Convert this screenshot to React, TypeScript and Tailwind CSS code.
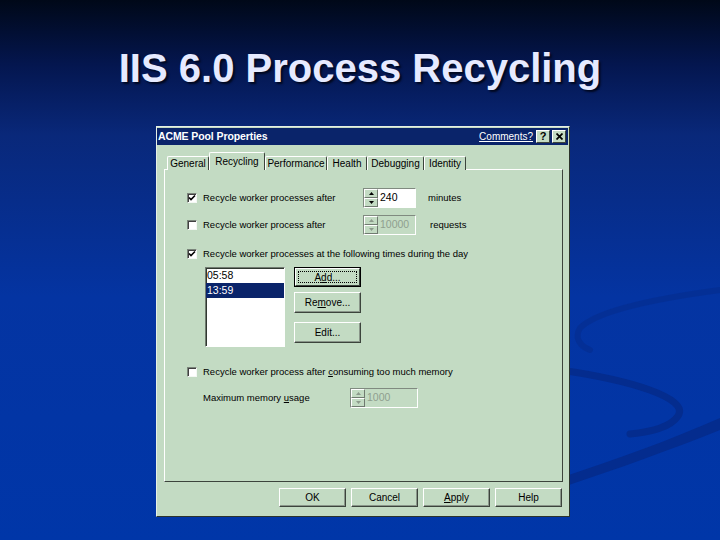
import React from "react";

const face = "bg-[#c3dbc3]";

function Checkbox({ checked }: { checked?: boolean }) {
  return (
    <div className="w-[10px] h-[10px] shrink-0 bg-white border-t border-l border-t-[#7a847a] border-l-[#7a847a] border-b border-r border-b-[#f4f8f4] border-r-[#f4f8f4] shadow-[inset_1px_1px_0_#404040] flex items-center justify-center">
      {checked && (
        <svg width="8" height="8" viewBox="0 0 8 8">
          <path d="M1 3.5 L3 5.5 L7 1.5" stroke="#000" strokeWidth="1.6" fill="none" />
        </svg>
      )}
    </div>
  );
}

function Arrow({ up, disabled }: { up?: boolean; disabled?: boolean }) {
  return (
    <svg width="5" height="3" viewBox="0 0 5 3">
      <path
        d={up ? "M0 3 L2.5 0 L5 3 Z" : "M0 0 L2.5 3 L5 0 Z"}
        fill={disabled ? "#8c9a8c" : "#000"}
      />
    </svg>
  );
}

function Spinner({
  value,
  disabled,
  width,
}: {
  value: string;
  disabled?: boolean;
  width: string;
}) {
  return (
    <div
      className={`${width} h-[20px] shrink-0 flex border-t border-l border-t-[#808a80] border-l-[#808a80] border-b border-r border-b-white border-r-white`}
    >
      <div className="w-[14px] flex flex-col">
        <div className={`flex-1 ${face} border-t border-l border-white border-b border-r border-b-[#707a70] border-r-[#707a70] flex items-center justify-center`}>
          <Arrow up disabled={disabled} />
        </div>
        <div className={`flex-1 ${face} border-t border-l border-white border-b border-r border-b-[#707a70] border-r-[#707a70] flex items-center justify-center`}>
          <Arrow disabled={disabled} />
        </div>
      </div>
      <div
        className={`flex-1 flex items-center pl-[2px] text-[10.5px] ${
          disabled ? `${face} text-[#8f9f8f]` : "bg-white text-black"
        }`}
      >
        {value}
      </div>
    </div>
  );
}

function Button({ children, h }: { children: React.ReactNode; h: string }) {
  return (
    <div
      className={`${h} w-[67px] ${face} flex items-center justify-center border-t border-l border-white border-b border-r border-b-[#3c443c] border-r-[#3c443c] shadow-[inset_-1px_-1px_0_#8a968a] text-[10px]`}
    >
      {children}
    </div>
  );
}

const tabs = [
  { label: "General", w: "w-[42px]" },
  { label: "Recycling", w: "w-[56px]", active: true },
  { label: "Performance", w: "w-[62px]" },
  { label: "Health", w: "w-[40px]" },
  { label: "Debugging", w: "w-[57px]" },
  { label: "Identity", w: "w-[42px]" },
];

export default function App() {
  return (
    <div className="relative w-[720px] h-[540px] overflow-hidden bg-[linear-gradient(to_bottom,#000818_0%,#04164f_12%,#09287a_25%,#0434a2_55%,#0036a8_100%)] font-['Liberation_Sans',Arial,sans-serif]">
      {/* background swoosh */}
      <svg className="absolute inset-0" width="720" height="540" viewBox="0 0 720 540">
        <path
          d="M720 290 C660 298 598 310 580 328 C574 338 580 346 590 350"
          stroke="#052e92"
          strokeWidth="6"
          fill="none"
          strokeLinecap="round"
          opacity="0.8"
        />
        <path
          d="M560 370 C630 380 690 398 678 416 C670 428 650 432 630 434"
          stroke="#042c8e"
          strokeWidth="7"
          fill="none"
          strokeLinecap="round"
        />
        <path
          d="M560 478 C620 458 670 440 720 418 L720 430 C670 450 620 468 560 488 Z"
          fill="#042c8e"
        />
      </svg>

      <h1 className="relative pt-[48px] text-center text-[40px] leading-[40px] font-bold text-[#e6eaff] [text-shadow:2px_2px_2px_#000820]">
        IIS 6.0 Process Recycling
      </h1>

      {/* dialog */}
      <div
        className={`relative ml-[156px] mt-[38px] w-[414px] h-[391px] ${face} border border-t-[#e6efe6] border-l-[#e6efe6] border-b-[#2c342c] border-r-[#2c342c] flex flex-col text-black`}
      >
        <div className="pt-[1px] pr-[1px]">
          <div className="h-[17px] bg-[#0a246a] flex items-center pl-[1px] pr-[2px] text-white">
            <span className="text-[10.5px] font-bold tracking-[-0.1px]">ACME Pool Properties</span>
            <span className="ml-auto text-[10px] underline">Comments?</span>
            <div className={`ml-[3px] w-[14px] h-[13px] ${face} border-t border-l border-white border-b border-r border-b-[#3c443c] border-r-[#3c443c] flex items-center justify-center text-black text-[11px] font-bold leading-none`}>
              ?
            </div>
            <div className={`ml-[2px] w-[14px] h-[13px] ${face} border-t border-l border-white border-b border-r border-b-[#3c443c] border-r-[#3c443c] flex items-center justify-center`}>
              <svg width="7" height="7" viewBox="0 0 7 7">
                <path d="M0.5 0.5 L6.5 6.5 M6.5 0.5 L0.5 6.5" stroke="#000" strokeWidth="1.7" />
              </svg>
            </div>
          </div>
        </div>

        <div className="pl-[7px] pr-[6px] flex flex-col">
          {/* tabs */}
          <div className="relative z-10 mt-[7px] h-[18px] -mb-px flex items-end pl-[3px]">
            {tabs.map((t) =>
              t.active ? (
                <div
                  key={t.label}
                  className={`${t.w} h-[18px] ${face} border-t border-l border-white border-r border-r-[#3c443c] rounded-t-[2px] flex justify-center pt-[1px] text-[10px]`}
                >
                  {t.label}
                </div>
              ) : (
                <div
                  key={t.label}
                  className={`${t.w} h-[14px] ${face} border-t border-l border-white border-r border-r-[#3c443c] rounded-t-[2px] flex items-center justify-center text-[10px]`}
                >
                  {t.label}
                </div>
              )
            )}
          </div>

          {/* panel */}
          <div className="h-[313px] border-t border-l border-white border-b border-r border-b-[#3c443c] border-r-[#3c443c] pt-[18px] pl-[22px] flex flex-col text-[9.5px]">
            <div className="h-[20px] flex items-center">
              <Checkbox checked />
              <span className="ml-[6px] w-[160px]">Recycle worker processes after</span>
              <Spinner value="240" width="w-[53px]" />
              <span className="ml-[12px]">minutes</span>
            </div>
            <div className="mt-[7px] h-[20px] flex items-center">
              <Checkbox />
              <span className="ml-[6px] w-[160px]">Recycle worker process after</span>
              <Spinner value="10000" disabled width="w-[53px]" />
              <span className="ml-[14px]">requests</span>
            </div>
            <div className="mt-[13px] h-[12px] flex items-center">
              <Checkbox checked />
              <span className="ml-[6px]">Recycle worker processes at the following times during the day</span>
            </div>
            <div className="mt-[7px] ml-[18px] flex">
              <div className="w-[80px] h-[80px] bg-white border-t border-l border-t-[#707a70] border-l-[#707a70] border-b border-r border-b-white border-r-white shadow-[inset_1px_1px_0_#303830] text-[10.5px]">
                <div className="h-[15px] flex items-center pl-[1px]">05:58</div>
                <div className="h-[15px] flex items-center pl-[1px] bg-[#0a246a] text-white">13:59</div>
              </div>
              <div className="ml-[9px] flex flex-col text-[10px]">
                <div className="w-[67px] h-[20px] border border-black">
                  <div className={`h-full ${face} border-t border-l border-white border-b border-r border-b-[#3c443c] border-r-[#3c443c] p-[2px]`}>
                    <div className="h-full border border-dotted border-black flex items-center justify-center">
                      <span>
                        A<span className="underline">d</span>d...
                      </span>
                    </div>
                  </div>
                </div>
                <div className="mt-[5px]">
                  <Button h="h-[21px]">
                    <span>
                      Re<span className="underline">m</span>ove...
                    </span>
                  </Button>
                </div>
                <div className="mt-[9px]">
                  <Button h="h-[21px]">
                    <span>Edit...</span>
                  </Button>
                </div>
              </div>
            </div>
            <div className="mt-[19px] h-[12px] flex items-center">
              <Checkbox />
              <span className="ml-[6px]">
                Recycle worker process after <span className="underline">c</span>onsuming too much memory
              </span>
            </div>
            <div className="mt-[10px] h-[20px] flex items-center">
              <span className="ml-[16px] w-[147px]">
                Maximum memory <span className="underline">u</span>sage
              </span>
              <Spinner value="1000" disabled width="w-[68px]" />
            </div>
          </div>

          {/* bottom buttons */}
          <div className="mt-[6px] flex justify-end gap-[5px] pr-[1px]">
            <Button h="h-[19px]">OK</Button>
            <Button h="h-[19px]">Cancel</Button>
            <Button h="h-[19px]">
              <span>
                <span className="underline">A</span>pply
              </span>
            </Button>
            <Button h="h-[19px]">Help</Button>
          </div>
        </div>
      </div>
    </div>
  );
}
